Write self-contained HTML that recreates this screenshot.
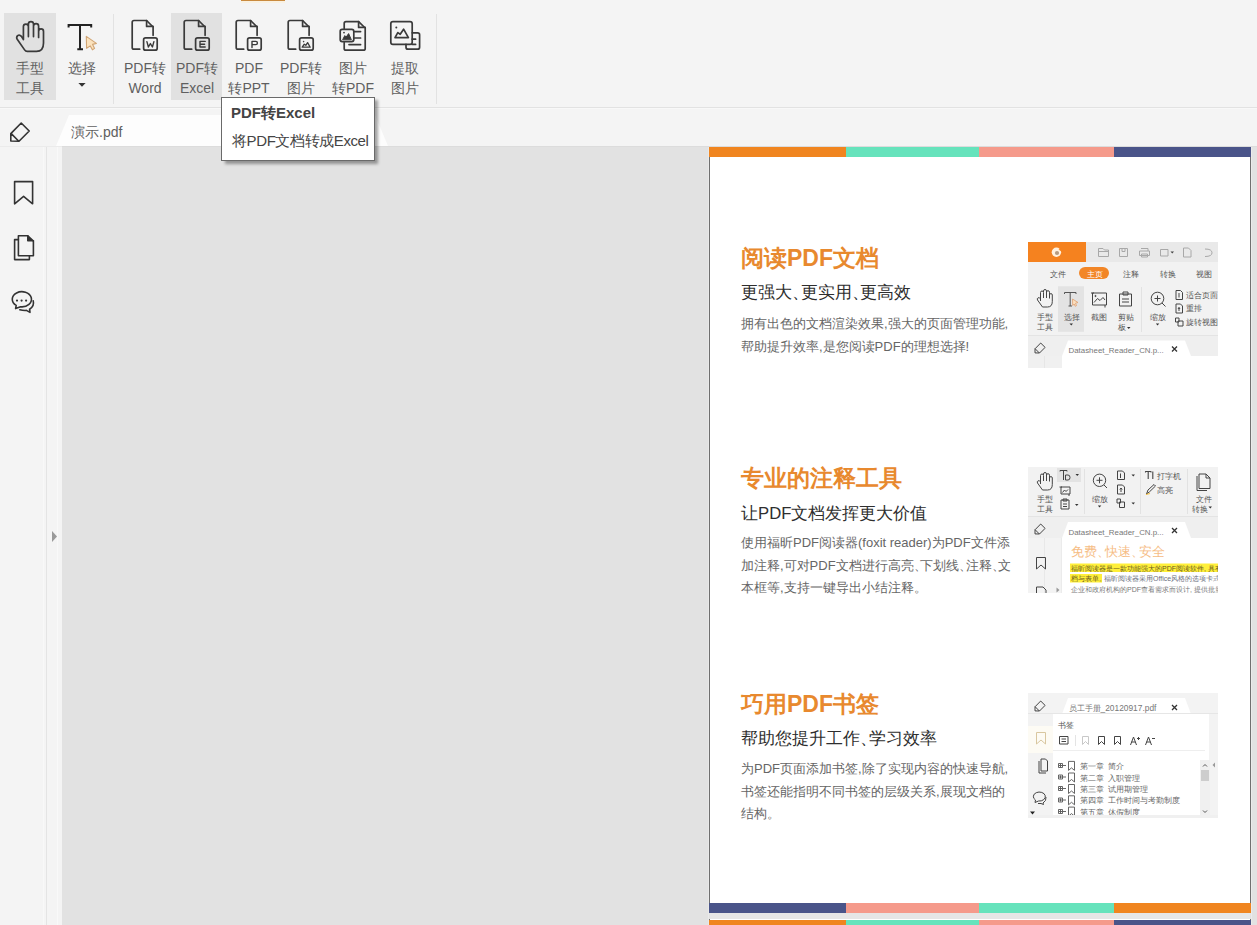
<!DOCTYPE html>
<html><head><meta charset="utf-8">
<style>
*{margin:0;padding:0;box-sizing:border-box}
html,body{width:1257px;height:925px;overflow:hidden;background:#f4f4f4;font-family:"Liberation Sans",sans-serif;position:relative}
.a{position:absolute}
.lbl{position:absolute;top:58px;width:52px;text-align:center;font-size:14px;line-height:20px;color:#5f5f5f;white-space:nowrap}
.hl{position:absolute;top:13px;width:52px;height:87px;background:#e1e1e1}
.sep{position:absolute;top:14px;width:1px;height:90px;background:#e2e2e2}
svg{position:absolute;overflow:visible}
.ttl{position:absolute;left:741px;font-size:23px;line-height:30px;font-weight:bold;color:#e8892e;white-space:nowrap}
.sub{position:absolute;left:741px;font-size:16.7px;line-height:22px;color:#2e2e2e;white-space:nowrap}
.dn{margin-right:-0.5em}
.body{position:absolute;left:741px;font-size:13px;line-height:22.5px;color:#666;white-space:nowrap}
</style></head><body>
<!-- toolbar -->
<div class="a" style="left:241px;top:0;width:44px;height:1px;background:#c98a3e"></div><div class="a" style="left:241px;top:1px;width:44px;height:2px;background:#f9f1e2"></div>
<div class="hl" style="left:4px"></div>
<div class="hl" style="left:171px;width:51px"></div>
<div class="sep" style="left:113px"></div>
<div class="sep" style="left:436px"></div>
<div class="a" style="left:0;top:107px;width:1257px;height:1px;background:#e2e2e2"></div><div class="a" style="left:0;top:108px;width:1257px;height:1px;background:#f8f8f8"></div>

<svg class="a" style="left:0;top:0" width="450" height="106" viewBox="0 0 450 106"><g stroke="#3a3a3a" stroke-width="1.7" stroke-linecap="round" stroke-linejoin="round"><path d="M23.4,39.5 V26.6 A2.5,2.5 0 0 1 28.4,26.6 V36.6 M28.4,26 V24.1 A2.55,2.55 0 0 1 33.5,24.1 V36.6 M33.5,26.2 A2.55,2.55 0 0 1 38.6,26.2 V37.4 M38.6,31.4 A2.45,2.45 0 0 1 43.5,31.4 V43 Q43.5,51.4 36.5,51.4 H27.2 Q25.6,51.4 24.6,49.9 L17.2,39.2 Q16,37.2 17.6,35.6 Q19.6,34.2 21.4,36.4 L23.4,39.5" fill="none"/><path d="M68.6,27.6 V25 H91.2 V27.6 M80,25 V49.2 M77.3,49.2 H83" fill="none" stroke="#222" stroke-width="2" stroke-linecap="butt" stroke-linejoin="miter"/><path d="M86.3,36.4 L96.4,43.4 L92.6,44.4 L94.6,48.4 L92.4,49.8 L90.3,45.9 L86.6,48.3 Z" fill="#fbe2bd" stroke="#d1a574" stroke-width="1.1"/><g transform="translate(0,0)"><path d="M139.7,49.2 H134 Q132.2,49.2 132.2,47.4 V22.3 Q132.2,20.5 134,20.5 H146.6 L153.1,27 V35.3" fill="none"/><path d="M146.6,20.5 V26.4 H153.1" fill="none"/><rect x="143.6" y="37.8" width="13.6" height="12.4" rx="2" fill="none"/><path d="M146.9,41.6 L148.4,47 L150.4,43.6 L152.4,47 L153.9,41.6" fill="none" stroke-width="1.4"/></g><g transform="translate(52,0)"><path d="M139.7,49.2 H134 Q132.2,49.2 132.2,47.4 V22.3 Q132.2,20.5 134,20.5 H146.6 L153.1,27 V35.3" fill="none"/><path d="M146.6,20.5 V26.4 H153.1" fill="none"/><rect x="143.6" y="37.8" width="13.6" height="12.4" rx="2" fill="none"/><path d="M153.2,41.4 H148 V47 H153.2 M148,44.2 H152.6" fill="none" stroke-width="1.4"/></g><g transform="translate(104,0)"><path d="M139.7,49.2 H134 Q132.2,49.2 132.2,47.4 V22.3 Q132.2,20.5 134,20.5 H146.6 L153.1,27 V35.3" fill="none"/><path d="M146.6,20.5 V26.4 H153.1" fill="none"/><rect x="143.6" y="37.8" width="13.6" height="12.4" rx="2" fill="none"/><path d="M148,47.6 V41.4 H151.8 Q153.4,41.4 153.4,43 Q153.4,44.6 151.8,44.6 H148" fill="none" stroke-width="1.4"/></g><g transform="translate(156,0)"><path d="M139.7,49.2 H134 Q132.2,49.2 132.2,47.4 V22.3 Q132.2,20.5 134,20.5 H146.6 L153.1,27 V35.3" fill="none"/><path d="M146.6,20.5 V26.4 H153.1" fill="none"/><rect x="143.6" y="37.8" width="13.6" height="12.4" rx="2" fill="none"/><circle cx="147.6" cy="41.6" r="0.8" fill="#454545" stroke="none"/><path d="M146.2,47.2 L148.3,44.2 L149.8,45.3 L151.6,42.6 L154.2,47.2 Z" fill="none" stroke-width="1.3"/></g><path d="M344.2,28.5 V23.5 Q344.2,21.6 346,21.6 H358.6 L365.2,28 V48.4 Q365.2,50.2 363.4,50.2 H346 Q344.2,50.2 344.2,48.4 V42.6" fill="none"/><path d="M358.6,21.6 V27.4 H365.2" fill="none"/><rect x="340.2" y="29.4" width="13.6" height="12.2" rx="2" fill="none"/><circle cx="344" cy="32.6" r="0.9" fill="#3a3a3a" stroke="none"/><path d="M342.8,39.4 L344.8,35.6 L346.2,37 L348.6,33.6 L351.2,39.4 Z" fill="#3a3a3a" stroke-width="1"/><path d="M354.6,31.6 H360.6 M354.6,38 H360.6 M349,44.6 H360.6" fill="none"/><rect x="390.8" y="21.6" width="21.4" height="22.8" rx="2.2" fill="none"/><circle cx="396.3" cy="27.4" r="1" fill="#3a3a3a" stroke="none"/><path d="M395,37.6 L397.8,32.6 L400.2,34.3 L403.6,29.2 L408.4,37.6 Z" fill="none"/><path d="M412.2,32.8 H417.6 Q419.6,32.8 419.6,34.8 V47.2 Q419.6,49.2 417.6,49.2 H408 Q406,49.2 406,47.2 V44.4 M412.2,39.2 H415.6 M412.2,44.4 H415.6" fill="none"/><path d="M78.4,83 H85.6 L82,86.8 Z" fill="#333" stroke="none"/></g></svg>

<div class="lbl" style="left:4px">手型<br>工具</div>
<div class="lbl" style="left:56px">选择</div>
<div class="lbl" style="left:119px">PDF转<br>Word</div>
<div class="lbl" style="left:171px">PDF转<br>Excel</div>
<div class="lbl" style="left:223px">PDF<br>转PPT</div>
<div class="lbl" style="left:275px">PDF转<br>图片</div>
<div class="lbl" style="left:327px">图片<br>转PDF</div>
<div class="lbl" style="left:379px">提取<br>图片</div>

<!-- tab bar -->
<div class="a" style="left:0;top:109px;width:1257px;height:37px;background:#f4f4f4"></div>
<svg style="left:0;top:107px" width="400" height="40"><path d="M56 39 L69 8 L375 8 L388 39 Z" fill="#fdfdfd"/></svg>
<div class="a" style="left:71px;top:122px;font-size:14px;line-height:20px;color:#606060">演示.pdf</div>

<!-- left sidebar -->
<div class="a" style="left:0;top:146px;width:62px;height:779px;background:#f4f4f4"></div>
<div class="a" style="left:0;top:146px;width:62px;height:1px;background:#ebebeb"></div>
<div class="a" style="left:43px;top:147px;width:1px;height:778px;background:#f8f8f8"></div>
<div class="a" style="left:46px;top:147px;width:1px;height:778px;background:#e4e4e4"></div>
<div class="a" style="left:57px;top:147px;width:1px;height:778px;background:#f9f9f9"></div>

<!-- canvas -->
<div class="a" style="left:62px;top:146px;width:1195px;height:779px;background:#e2e2e2"></div><div class="a" style="left:62px;top:146px;width:1195px;height:1px;background:#dcdcdc"></div>

<!-- page -->
<div class="a" style="left:708px;top:147px;width:1px;height:778px;background:#e9e9e9"></div><div class="a" style="left:1251px;top:147px;width:1px;height:778px;background:#ebebeb"></div><div class="a" style="left:710px;top:913px;width:540px;height:6px;background:#e6e6e6"></div><div class="a" style="left:709px;top:147px;width:542px;height:766px;background:#fff;border-left:1px solid #707070;border-right:1px solid #707070"></div>
<div class="a" style="left:709px;top:147px;width:137px;height:10px;background:#f0851f"></div>
<div class="a" style="left:846px;top:147px;width:133px;height:10px;background:#66e3bc"></div>
<div class="a" style="left:979px;top:147px;width:135px;height:10px;background:#f59a8b"></div>
<div class="a" style="left:1114px;top:147px;width:137px;height:10px;background:#4a5489"></div>

<div class="a" style="left:709px;top:903px;width:137px;height:10px;background:#4a5489"></div>
<div class="a" style="left:846px;top:903px;width:133px;height:10px;background:#f59a8b"></div>
<div class="a" style="left:979px;top:903px;width:135px;height:10px;background:#66e3bc"></div>
<div class="a" style="left:1114px;top:903px;width:137px;height:10px;background:#f0851f"></div>

<div class="a" style="left:709px;top:919px;width:542px;height:6px;background:#fff;border-left:1px solid #707070;border-right:1px solid #707070"></div>
<div class="a" style="left:709px;top:920px;width:137px;height:5px;background:#f0851f"></div>
<div class="a" style="left:846px;top:920px;width:133px;height:5px;background:#66e3bc"></div>
<div class="a" style="left:979px;top:920px;width:135px;height:5px;background:#f59a8b"></div>
<div class="a" style="left:1114px;top:920px;width:137px;height:5px;background:#4a5489"></div>

<svg class="a" style="left:0;top:107px" width="62" height="818" viewBox="0 107 62 818"><g stroke="#333" stroke-width="1.6" fill="none" stroke-linejoin="round" stroke-linecap="round">
<path d="M10.8,141 V133.6 L21.2,123 L29.2,131 L19,141.2 Z M11,133.4 L18.8,141.2"/>
<path d="M14.6,181.6 H32.6 V203.8 L23.6,196.4 L14.6,203.8 Z"/>
<path d="M18.4,239.6 H14.6 V259.6 H29.4 V255.8"/>
<path d="M18.4,235.8 H27.8 L33.4,241.2 V255.8 H18.4 Z"/>
<path d="M27.8,235.8 V240.8 H33.4" fill="#333"/>
<path d="M16.2,305.4 A9.6,7.6 0 1 1 20.6,306.8 L15.6,308.6 Z"/>
<path d="M33.2,300.8 Q34.6,306.2 29.6,309.2 L30,312.4 L26.4,310.4 Q23,310.6 19.8,309.8"/>
</g><g fill="#333"><circle cx="17" cy="300.6" r="1.1"/><circle cx="21.6" cy="300.6" r="1.1"/><circle cx="26.1" cy="300.6" r="1.1"/>
<path d="M52,531 L57,536.5 L52,542 Z" fill="#9a9a9a"/></g></svg>
<div class="ttl" style="top:243px">阅读PDF文档</div>
<div class="sub" style="top:282px">更强大<span class="dn">、</span>更实用<span class="dn">、</span>更高效</div>
<div class="body" style="top:313px">拥有出色的文档渲染效果,强大的页面管理功能,<br>帮助提升效率,是您阅读PDF的理想选择!</div>
<div class="ttl" style="top:463px">专业的注释工具</div>
<div class="sub" style="top:503px">让PDF文档发挥更大价值</div>
<div class="body" style="top:532px">使用福昕PDF阅读器(foxit reader)为PDF文件添<br>加注释,可对PDF文档进行高亮<span class="dn">、</span>下划线<span class="dn">、</span>注释<span class="dn">、</span>文<br>本框等,支持一键导出小结注释。</div>
<div class="ttl" style="top:689px">巧用PDF书签</div>
<div class="sub" style="top:728px">帮助您提升工作<span class="dn">、</span>学习效率</div>
<div class="body" style="top:758px">为PDF页面添加书签,除了实现内容的快速导航,<br>书签还能指明不同书签的层级关系,展现文档的<br>结构。</div>
<svg class="a" style="left:1028px;top:242px;overflow:hidden" width="190" height="126" viewBox="1028 242 190 126">
<rect x="1028" y="242" width="190" height="114" fill="#f2f2f2"/>
<rect x="1086" y="242" width="132" height="20" fill="#e9e9e9"/>
<rect x="1028" y="242" width="58" height="20" fill="#f5821f"/>
<circle cx="1056.4" cy="252.3" r="4.7" fill="#fff1df"/><circle cx="1057" cy="253" r="2.1" fill="#b59a80"/><path d="M1058.5,249.5 L1061.5,248.5 L1061.5,251.5 Z" fill="#f5821f"/>
<g fill="none" stroke="#a8a8a8" stroke-width="1">
<path d="M1098.5,248.5 H1103 L1104.5,250 H1108.5 V256.5 H1098.5 Z M1098.5,251.5 H1108.5"/>
<path d="M1119.5,248.5 H1127.5 V256.5 H1119.5 Z M1122,248.5 V251.5 H1125 V248.5"/>
<path d="M1141,248.5 H1148 V251 M1139.5,251 H1149.5 V255.5 H1139.5 Z M1141.5,254 H1147.5 V257 H1141.5 Z"/>
<path d="M1160.5,249.5 H1168 V256 H1160.5 Z"/>
<path d="M1183.5,248 H1188.5 L1191,250.5 V257 H1183.5 Z"/>
<path d="M1205,249 Q1212,249 1212,252.8 Q1212,256.5 1205,256.5"/>
</g>
<path d="M1170.5,251.6 H1174 L1172.25,253.6 Z" fill="#444"/>
<rect x="1079" y="267" width="30" height="12" rx="6" fill="#f28627"/>
<g font-size="8" fill="#555" font-family="Liberation Sans, sans-serif">
<text x="1050" y="276.8">文件</text><text x="1122.5" y="276.8">注释</text><text x="1160" y="276.8">转换</text><text x="1196" y="276.8">视图</text>
<text x="1086.5" y="276.5" fill="#fff">主页</text>
</g>
<rect x="1058" y="286.3" width="26" height="45.5" fill="#e3e3e3"/>
<line x1="1141.5" y1="287" x2="1141.5" y2="332" stroke="#e2e2e2"/>
<line x1="1028" y1="335.5" x2="1218" y2="335.5" stroke="#e4e4e4"/>
<g fill="none" stroke="#444" stroke-width="1" stroke-linejoin="round">
<path d="M1040.5,301 V292.5 A1.5,1.5 0 0 1 1043.5,292.5 V298 M1043.5,292 V291 A1.5,1.5 0 0 1 1046.5,291 V298 M1046.5,292.2 A1.5,1.5 0 0 1 1049.5,292.2 V298.5 M1049.5,295 A1.4,1.4 0 0 1 1052.3,295 V301.5 Q1052.3,307 1047.5,307 H1042.5 L1037.5,300 Q1036.8,298.6 1038,297.8 Q1039.2,297.2 1040.5,298.8"/>
<path d="M1064.5,294 V292.5 H1076 V294 M1070.2,292.5 V306 M1068.5,306 H1072" stroke="#555"/>
<path d="M1072.5,299 L1078,302.5 L1075.5,303.2 L1076.5,305.6 L1075.3,306.3 L1074.2,304 L1072.7,305.5 Z" fill="#fbe0c0" stroke="#e0a070" stroke-width="0.8"/>
<path d="M1092.5,293 V305 H1106.5 V293 Z M1091,293 H1094 M1105,305 V307.5 M1094,302.5 L1097.5,298.5 L1100,300.5 L1103,297.5 L1105,300" />
<circle cx="1095.5" cy="296" r="0.6" fill="#444"/>
<path d="M1119.5,294 H1131.5 V306 H1119.5 Z M1123,292 H1128 V295 H1123 Z M1122,299 H1129 M1122,302 H1129"/>
<circle cx="1157.5" cy="298.5" r="6.3"/><path d="M1154.5,298.5 H1160.5 M1157.5,295.5 V301.5 M1162,303 L1165.5,306.5"/>
<path d="M1176,290.5 H1180.5 L1182.5,292.5 V299.5 H1176 Z M1179,293 V297.5"/>
<path d="M1176,304 H1180.5 L1182.5,306 V313 H1176 Z M1179,307.5 V311 M1178,309 L1179,307.5 L1180,309"/>
<path d="M1175.5,318 H1179 V322 H1175.5 Z M1178,321 H1183 V326 H1178 Z"/>
</g>
<g font-size="7.6" fill="#555" font-family="Liberation Sans, sans-serif">
<text x="1036.5" y="319.5">手型</text><text x="1036.5" y="330">工具</text>
<text x="1063.5" y="319.5">选择</text>
<text x="1090.5" y="319.5">截图</text>
<text x="1117.5" y="319.5">剪贴</text><text x="1117.5" y="330">板</text>
<text x="1149.5" y="319.5">缩放</text>
<text x="1186" y="298">适合页面</text><text x="1186" y="311">重排</text><text x="1186" y="325">旋转视图</text>
</g>
<path d="M1069.5,323.5 H1073 L1071.25,325.5 Z M1127,327 H1130.5 L1128.75,329 Z M1155.8,323.5 H1159.3 L1157.55,325.5 Z" fill="#333"/>
<rect x="1028" y="336" width="190" height="20" fill="#efefef"/>
<path d="M1062,356 L1068,340.5 H1185 L1191,356 Z" fill="#fff"/>
<path d="M1035.0,352.9 V348.8 L1040.7,343.0 L1045.1,347.4 L1039.5,353.0 Z M1035.1,348.7 L1039.4,353.0" fill="none" stroke="#444" stroke-width="1"/>
<text x="1068.5" y="353" font-size="7.9" fill="#777" font-family="Liberation Sans, sans-serif">Datasheet_Reader_CN.p...</text>
<path d="M1172,346.5 L1177,351.5 M1177,346.5 L1172,351.5" stroke="#333" stroke-width="1.3"/>
<rect x="1028" y="356" width="34" height="12" fill="#f0f0f0"/>
<line x1="1044.5" y1="356" x2="1044.5" y2="368" stroke="#e6e6e6"/>
</svg>
<svg class="a" style="left:1028px;top:467px;overflow:hidden" width="190" height="126" viewBox="1028 467 190 126">
<rect x="1028" y="467" width="190" height="72" fill="#f2f2f2"/>
<rect x="1057" y="468" width="24" height="14" fill="#e3e3e3"/>
<g stroke="#e2e2e2"><line x1="1084.5" y1="469" x2="1084.5" y2="514"/><line x1="1140.5" y1="469" x2="1140.5" y2="514"/><line x1="1187.5" y1="469" x2="1187.5" y2="514"/>
<line x1="1028" y1="516.5" x2="1218" y2="516.5" stroke="#e4e4e4"/></g>
<g fill="none" stroke="#444" stroke-width="1" stroke-linejoin="round">
<path d="M1040.5,484 V475.5 A1.5,1.5 0 0 1 1043.5,475.5 V481 M1043.5,475 V474 A1.5,1.5 0 0 1 1046.5,474 V481 M1046.5,475.2 A1.5,1.5 0 0 1 1049.5,475.2 V481.5 M1049.5,478 A1.4,1.4 0 0 1 1052.3,478 V484.5 Q1052.3,490 1047.5,490 H1042.5 L1037.5,483 Q1036.8,481.6 1038,480.8 Q1039.2,480.2 1040.5,481.8"/>
<path d="M1060,471.5 V470.5 H1067 V471.5 M1063.5,470.5 V480 M1065.5,475 H1068 Q1070,475 1070,477.5 Q1070,480 1068,480 H1065.5 Z"/>
<path d="M1061,487 H1070 V494 H1061 Z M1059.5,487 H1062 M1069,494 V496 M1062.5,492.5 L1064.5,490 L1066,491.5 L1068,489.5"/>
<path d="M1061,500 H1069 V509 H1061 Z M1063,499 H1067 V501 H1063 Z M1063,504 H1067 M1063,506.5 H1067"/>
<circle cx="1099.5" cy="480.3" r="6.2"/><path d="M1096.5,480.3 H1102.5 M1099.5,477.3 V483.3 M1104,485 L1107,488"/>
<path d="M1117.5,471 H1122.5 L1124.5,473 V479.5 H1117.5 Z M1120.5,473.5 V478"/>
<path d="M1117.5,485 H1122.5 L1124.5,487 V494 H1117.5 Z M1121,488 V492 M1119.8,489.5 L1121,488 L1122.2,489.5"/>
<path d="M1117,499 H1120.5 V503 H1117 Z M1119.5,502 H1124.5 V507.5 H1119.5 Z"/>
<path d="M1145.5,472.5 V471.5 H1151 V472.5 M1148.2,471.5 V479 M1152.8,471.5 V479" stroke-width="1.1"/>
<path d="M1146.5,494 L1148,490 L1154,484.5 L1155.5,486 L1149.5,491.8 Z"/>
<path d="M1199,474 H1206 L1210,478 V488.5 H1199 Z M1197,476 V490.5 H1207 M1206,474 V478 H1210"/>
</g>
<path d="M1146,494.5 L1150,493.5" stroke="#f5c040" stroke-width="1.2"/>
<g fill="#333"><path d="M1075.5,474 H1079 L1077.25,476 Z M1075,504 H1078.5 L1076.75,506 Z M1097.8,505.5 H1101.3 L1099.55,507.5 Z M1131.5,474.5 H1135 L1133.25,476.5 Z M1131.5,502.5 H1135 L1133.25,504.5 Z M1208.5,506.5 H1212 L1210.25,508.5 Z"/></g>
<g font-size="7.6" fill="#555" font-family="Liberation Sans, sans-serif">
<text x="1036.5" y="502">手型</text><text x="1036.5" y="512">工具</text>
<text x="1092" y="502">缩放</text>
<text x="1157" y="479">打字机</text><text x="1157" y="493">高亮</text>
<text x="1196" y="502">文件</text><text x="1192" y="512">转换</text>
</g>
<rect x="1028" y="517" width="190" height="21" fill="#efefef"/>
<path d="M1062,538 L1068,522 H1185 L1191,538 Z" fill="#fff"/>
<path d="M1035.0,533.9 V529.8 L1040.7,524.0 L1045.1,528.4 L1039.5,534.0 Z M1035.1,529.7 L1039.4,534.0" fill="none" stroke="#444" stroke-width="1"/>
<text x="1068.5" y="534.5" font-size="7.9" fill="#777" font-family="Liberation Sans, sans-serif">Datasheet_Reader_CN.p...</text>
<path d="M1172,528 L1177,533 M1177,528 L1172,533" stroke="#333" stroke-width="1.3"/>
<rect x="1028" y="538" width="34" height="55" fill="#f3f3f3"/>
<line x1="1044.5" y1="538" x2="1044.5" y2="593" stroke="#e8e8e8"/>
<line x1="1061.5" y1="538" x2="1061.5" y2="593" stroke="#ebebeb"/>
<rect x="1062" y="538" width="156" height="55" fill="#fff"/>
<path d="M1036.5,557.5 H1045.5 V569 L1041,565 L1036.5,569 Z" fill="none" stroke="#444" stroke-width="1"/>
<path d="M1036.5,593 V587 H1043 L1046,590 V593" fill="none" stroke="#444" stroke-width="1"/>
<path d="M1056.5,587.5 L1059.5,590 L1056.5,592.5 Z" fill="#999"/>
<text x="1071" y="555.5" font-size="12.6" fill="#f6bd85" font-family="Liberation Sans, sans-serif">免费、<tspan dx="-5">快速、</tspan><tspan dx="-5">安全</tspan></text>
<rect x="1070" y="563.5" width="148" height="8.5" fill="#ffef3a"/>
<rect x="1070" y="574" width="32" height="8.5" fill="#ffef3a"/>
<g font-size="7" font-family="Liberation Sans, sans-serif">
<text x="1071" y="570.5" fill="#6a5a20">福昕阅读器是一款功能强大的PDF阅读软件, 具有</text>
<text x="1071" y="581" fill="#6a5a20">档与表单。</text><text x="1104" y="581" fill="#6b7080">福昕阅读器采用Office风格的选项卡式</text>
<text x="1071" y="591.5" fill="#777">企业和政府机构的PDF查看需求而设计, 提供批量</text>
</g>
</svg>
<svg class="a" style="left:1028px;top:693px;overflow:hidden" width="190" height="126" viewBox="1028 693 190 126">
<rect x="1028" y="693" width="190" height="125" fill="#f3f3f3"/>
<path d="M1062,714 L1068,698 H1185 L1191,714 Z" fill="#fff"/>
<line x1="1028" y1="713.5" x2="1218" y2="713.5" stroke="#e6e6e6"/>
<path d="M1035.0,710.9 V706.8 L1040.7,701.0 L1045.1,705.4 L1039.5,711.0 Z M1035.1,706.7 L1039.4,711.0" fill="none" stroke="#444" stroke-width="1"/>
<text x="1068.5" y="711" font-size="8.4" fill="#777" font-family="Liberation Sans, sans-serif">员工手册_20120917.pdf</text>
<path d="M1172,705 L1177,710 M1177,705 L1172,710" stroke="#333" stroke-width="1.3"/>
<rect x="1053" y="714" width="156" height="101" fill="#fff"/>
<rect x="1028" y="726" width="25" height="27" fill="#fdfbf4"/>
<path d="M1036.5,732.5 H1045.5 V744 L1041,740 L1036.5,744 Z" fill="none" stroke="#d9c7a0" stroke-width="1"/>
<g fill="none" stroke="#444" stroke-width="1">
<path d="M1039,761 V773 H1046 M1041,759 H1045.5 L1047.5,761 V771 H1041 Z"/>
<path d="M1035.5,800 A6,4.5 0 1 1 1038.5,801 L1035,802.5 Z M1046,797 Q1046.5,801 1043,803 L1043.5,804.5 L1041,803.5 L1038,803.5"/>
<path d="M1059.5,736.5 H1068 V744 H1059.5 Z M1061.5,739 H1066 M1061.5,741.5 H1066"/>
<path d="M1098.5,736.5 H1104.5 V744.5 L1101.5,741.5 L1098.5,744.5 Z M1114.5,736.5 H1120.5 V744.5 L1117.5,741.5 L1114.5,744.5 Z"/>
<path d="M1082.5,736.5 H1088.5 V744.5 L1085.5,741.5 L1082.5,744.5 Z" stroke="#c8c8c8"/>
<path d="M1130.5,745 L1133.5,737 L1136.5,745 M1131.5,742 H1135.5 M1137,738.5 H1140 M1138.5,737 V740"/>
<path d="M1145.5,745 L1148.5,737 L1151.5,745 M1146.5,742 H1150.5 M1152,738.5 H1155"/>
</g>
<line x1="1075.5" y1="735" x2="1075.5" y2="746" stroke="#e4e4e4"/>
<line x1="1053" y1="750.5" x2="1205" y2="750.5" stroke="#eeeeee"/>
<path d="M1030,811.5 H1035 L1032.5,814.5 Z" fill="#222"/>
<text x="1058" y="728" font-size="8" fill="#555" font-family="Liberation Sans, sans-serif">书签</text>
<g font-size="8.4" fill="#666" font-family="Liberation Sans, sans-serif">
<text x="1080" y="768.9">第一章<tspan dx="4">简介</tspan></text>
<text x="1080" y="780.5">第二章<tspan dx="4">入职管理</tspan></text>
<text x="1080" y="792.0">第三章<tspan dx="4">试用期管理</tspan></text>
<text x="1080" y="803.3">第四章<tspan dx="4">工作时间与考勤制度</tspan></text>
<text x="1080" y="814.6">第五章<tspan dx="4">休假制度</tspan></text>
</g>
<g fill="none" stroke="#555" stroke-width="0.9">
<path d="M1058.5,763.5 H1062.5 V767.5 H1058.5 Z M1060.5,764 V767 M1059,765.5 H1062 M1062.5,765.5 H1066"/>
<path d="M1058.5,775 H1062.5 V779 H1058.5 Z M1060.5,775.5 V778.5 M1059,777 H1062 M1062.5,777 H1066"/>
<path d="M1058.5,786.5 H1062.5 V790.5 H1058.5 Z M1060.5,787 V790 M1059,788.5 H1062 M1062.5,788.5 H1066"/>
<path d="M1058.5,798 H1062.5 V802 H1058.5 Z M1060.5,798.5 V801.5 M1059,800 H1062 M1062.5,800 H1066"/>
<path d="M1058.5,809.5 H1062.5 V813.5 H1058.5 Z M1060.5,810 V813 M1059,811.5 H1062 M1062.5,811.5 H1066"/>
<path d="M1068.5,761.4 H1074.5 V770.4 L1071.5,767.9 L1068.5,770.4 Z M1068.5,773.0 H1074.5 V782.0 L1071.5,779.5 L1068.5,782.0 Z M1068.5,784.5 H1074.5 V793.5 L1071.5,791.0 L1068.5,793.5 Z M1068.5,795.8 H1074.5 V804.8 L1071.5,802.3 L1068.5,804.8 Z M1068.5,807.1 H1074.5 V816.1 L1071.5,813.6 L1068.5,816.1 Z"/>
</g>
<rect x="1200" y="760" width="10" height="55" fill="#f0f0f0"/>
<rect x="1201" y="770" width="8" height="11" fill="#cdcdcd"/>
<path d="M1203,766.5 L1205,764.5 L1207,766.5 M1203,810.5 L1205,812.5 L1207,810.5" fill="none" stroke="#555" stroke-width="1"/>
<path d="M1215,762.5 L1212.5,765 L1215,767.5 Z" fill="#999"/>
<rect x="1028" y="815" width="190" height="3" fill="#f0f0f0"/>
</svg>
<div id="shots"></div>

<!-- tooltip -->
<div class="a" style="left:225px;top:100px;width:153px;height:64px;background:rgba(0,0,0,0.35);filter:blur(1.5px)"></div>
<div class="a" style="left:221px;top:97px;width:154px;height:64px;background:#fff;border:1px solid #6a6a6a"></div>
<div class="a" style="left:231px;top:103px;font-size:15px;line-height:20px;font-weight:bold;color:#444;white-space:nowrap">PDF转Excel</div>
<div class="a" style="left:232px;top:131px;font-size:15px;line-height:20px;color:#444;letter-spacing:-0.4px;white-space:nowrap">将PDF文档转成Excel</div>
</body></html>
